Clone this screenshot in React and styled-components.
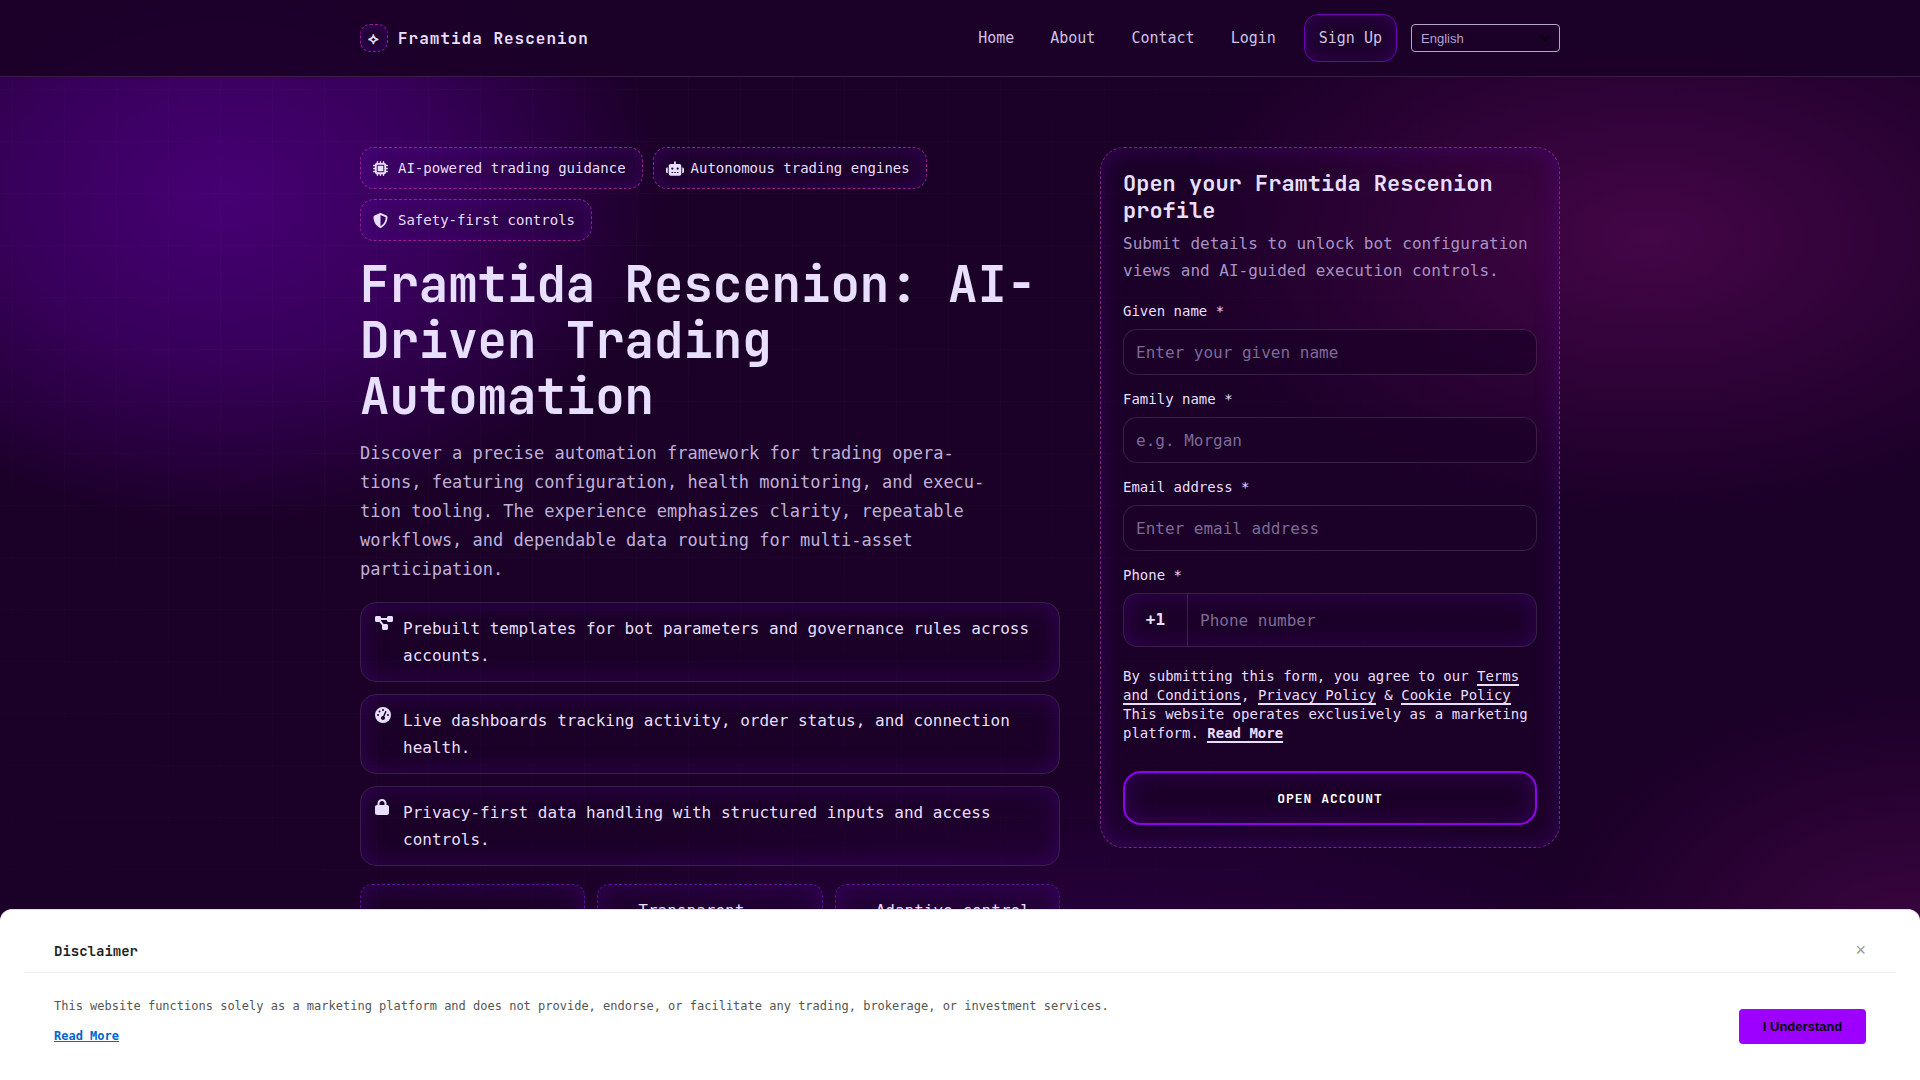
import React from 'react';
import styled, { createGlobalStyle, css } from 'styled-components';
import {
  FaMicrochip,
  FaRobot,
  FaShieldHalved,
  FaDiagramProject,
  FaGaugeHigh,
  FaLock,
  FaBolt,
  FaEye,
  FaSliders,
} from 'react-icons/fa6';

const GlobalStyles = createGlobalStyle`
  :root {
    --ink: #e8dfff;
    --muted: #b5a3d0;
    --bg: #1b0028;
    --violet: #9d00ff;
    --line: rgba(232, 223, 255, 0.14);
    --display: 'JetBrains Mono', 'DejaVu Sans Mono', monospace;
    --body: 'DejaVu Sans Mono', monospace;
  }
  * {
    box-sizing: border-box;
  }
  body {
    margin: 0;
    background: var(--bg);
    color: var(--ink);
    font-family: var(--body);
    font-size: 16px;
    line-height: 27px;
  }
  h1, h2, p, ul {
    margin: 0;
    padding: 0;
  }
`;

const glow = css`
  box-shadow: inset 0 0 24px rgba(106, 0, 200, 0.28);
`;

const PageStyles = styled.div`
  position: relative;
  height: 100vh;
  overflow: hidden;
  background-image: radial-gradient(
      ellipse 440px 330px at 225px 195px,
      rgba(112, 0, 190, 0.5),
      rgba(112, 0, 190, 0.33) 50%,
      transparent
    ),
    radial-gradient(ellipse 480px 275px at 86% 22%, rgba(172, 20, 150, 0.28), transparent),
    radial-gradient(ellipse 380px 260px at 100% 88%, rgba(150, 20, 130, 0.26), transparent),
    radial-gradient(ellipse 700px 300px at 56% 100%, rgba(110, 0, 190, 0.24), transparent);
  /* faint grid, fading out towards the right */
  &::before {
    content: '';
    position: absolute;
    inset: 0;
    background-image: linear-gradient(rgba(232, 223, 255, 0.025) 1px, transparent 1px),
      linear-gradient(90deg, rgba(232, 223, 255, 0.025) 1px, transparent 1px);
    background-size: 52px 52px;
    background-position: 12px 37px;
    mask-image: radial-gradient(ellipse 1250px 1200px at 30% 30%, #000, transparent);
  }
  > * {
    position: relative;
  }
`;

const HeaderStyles = styled.header`
  background: rgba(27, 0, 40, 0.93);
  border-bottom: 1px solid var(--line);
`;

const Container = styled.div`
  max-width: 1200px;
  margin: 0 auto;
`;

const Bar = styled(Container)`
  display: flex;
  align-items: center;
  justify-content: space-between;
  padding: 14px 0;
`;

const Brand = styled.a`
  display: flex;
  align-items: center;
  gap: 10px;
  color: var(--ink);
  font-family: var(--display);
  font-weight: 700;
  letter-spacing: 1px;
  text-decoration: none;
`;

const Mark = styled.span`
  display: grid;
  place-items: center;
  width: 28px;
  height: 28px;
  border: 1px dashed #9c1f96;
  border-radius: 10px;
  box-shadow: inset 0 0 12px rgba(106, 0, 200, 0.4);
`;

const NavStyles = styled.nav`
  display: flex;
  align-items: center;
  gap: 14px;
  font-size: 15px;
  a {
    color: #cfc2e8;
    text-decoration: none;
  }
`;

const Links = styled.div`
  display: flex;
  gap: 8px;
  a {
    padding: 0 14px;
  }
`;

const SignUp = styled.a`
  ${glow}
  padding: 0 14px;
  border: 1px solid #6f00b8;
  border-radius: 14px;
  line-height: 46px;
`;

const Language = styled.div`
  position: relative;
  display: flex;
  select {
    width: 149px;
    height: 28px;
    padding: 0 9px;
    appearance: none;
    background: transparent;
    border: 1px solid var(--muted);
    border-radius: 4px;
    color: var(--muted);
    font: 13px 'Liberation Sans', sans-serif;
  }
  svg {
    position: absolute;
    top: 10px;
    right: 10px;
    pointer-events: none;
  }
`;

const Hero = styled(Container)`
  display: grid;
  grid-template-columns: minmax(0, 1fr) 460px;
  align-items: start;
  gap: 40px;
  padding-top: 70px;
`;

const Chips = styled.ul`
  display: flex;
  flex-wrap: wrap;
  gap: 10px;
  list-style: none;
`;

const Chip = styled.li`
  ${glow}
  display: flex;
  align-items: center;
  gap: 7px;
  height: 42px;
  padding: 0 16px 0 12px;
  border: 1px dashed #9c1f96;
  border-radius: 14px;
  font-size: 14px;
`;

const IconSlot = styled.span`
  display: flex;
  flex: none;
  width: 18px;
  svg {
    width: 18px;
    height: ${({ $size }) => $size || 16}px;
  }
`;

const Title = styled.h1`
  margin: 16px 0 14px;
  font-family: var(--display);
  font-size: 49px;
  font-weight: 700;
  line-height: 56px;
`;

const Lead = styled.p`
  max-width: 640px;
  color: #bfb0da;
  font-size: 17px;
  line-height: 29px;
`;

const Features = styled.ul`
  display: grid;
  gap: 12px;
  margin: 18px 0;
  list-style: none;
`;

const Feature = styled.li`
  ${glow}
  display: flex;
  align-items: flex-start;
  gap: 10px;
  padding: 12px 14px;
  border: 1px solid var(--line);
  border-radius: 16px;
`;

const Perks = styled.ul`
  display: grid;
  grid-template-columns: repeat(3, minmax(0, 1fr));
  gap: 12px;
  list-style: none;
`;

const Perk = styled.li`
  ${glow}
  display: flex;
  align-items: center;
  gap: 10px;
  padding: 12px;
  border: 1px dashed #5c0f9c;
  border-radius: 12px;
`;

const FormCard = styled.form`
  ${glow}
  padding: 22px;
  border: 1px dashed #8a1f8f;
  border-radius: 24px;
  h2 {
    font-family: var(--display);
    font-size: 22px;
    font-weight: 700;
    line-height: 27px;
  }
  > p {
    margin: 6px 0 15px;
    color: #a892c4;
  }
`;

const Field = styled.div`
  margin-bottom: 12px;
  label {
    display: block;
    margin-bottom: 6px;
    font-size: 14px;
    line-height: 24px;
  }
`;

const Input = styled.input`
  width: 100%;
  height: 46px;
  padding: 0 12px;
  background: rgba(27, 0, 40, 0.7);
  border: 1px solid var(--line);
  border-radius: 14px;
  color: var(--ink);
  font: 16px var(--body);
  &::placeholder {
    color: #7e6a96;
    opacity: 1;
  }
`;

const PhoneBox = styled.div`
  ${glow}
  display: flex;
  height: 54px;
  border: 1px solid var(--line);
  border-radius: 14px;
  span {
    width: 64px;
    border-right: 1px solid var(--line);
    font-weight: 700;
    line-height: 52px;
    text-align: center;
  }
  ${Input} {
    flex: 1;
    height: 52px;
    background: none;
    border: 0;
  }
`;

const Legal = styled.div`
  margin: 20px 0 28px;
  font-size: 14px;
  line-height: 19px;
  a {
    border-bottom: 2px solid var(--ink);
    color: var(--ink);
    text-decoration: none;
  }
`;

const Submit = styled.button`
  ${glow}
  display: block;
  width: 100%;
  height: 54px;
  background: transparent;
  border: 2px solid #9000ea;
  border-radius: 18px;
  color: #fff;
  font-family: var(--display);
  font-size: 13px;
  font-weight: 700;
  letter-spacing: 1px;
  text-transform: uppercase;
`;

const NoticeStyles = styled.aside`
  && {
    position: fixed;
  }
  right: 0;
  bottom: 0;
  left: 0;
  padding: 19px 24px 0;
  background: #fff;
  border-top: 1px solid #e4dcec;
  border-radius: 12px 12px 0 0;
  color: #555;
  font-size: 12px;
  line-height: 20px;
`;

const NoticeHead = styled.div`
  display: flex;
  align-items: center;
  justify-content: space-between;
  height: 44px;
  padding: 0 30px;
  border-bottom: 1px solid #eee;
  h2 {
    color: #222;
    font-family: var(--display);
    font-size: 14px;
    font-weight: 700;
  }
  button {
    padding: 0;
    background: none;
    border: 0;
    color: #999;
    font: 18px 'Liberation Sans', sans-serif;
  }
`;

const NoticeBody = styled.div`
  display: flex;
  align-items: center;
  justify-content: space-between;
  padding: 23px 30px;
  p {
    margin-bottom: 10px;
  }
  a {
    display: inline-block;
    margin-bottom: 11px;
    color: #0066cc;
    font-weight: 700;
  }
`;

const Accept = styled.button`
  width: 127px;
  height: 35px;
  background: var(--violet);
  border: 0;
  border-radius: 4px;
  color: #000;
  font: bold 13px 'Liberation Sans', sans-serif;
`;

const chips = [
  { icon: FaMicrochip, text: 'AI-powered trading guidance' },
  { icon: FaRobot, text: 'Autonomous trading engines' },
  { icon: FaShieldHalved, text: 'Safety-first controls' },
];

const features = [
  {
    icon: FaDiagramProject,
    text: 'Prebuilt templates for bot parameters and governance rules across accounts.',
  },
  {
    icon: FaGaugeHigh,
    text: 'Live dashboards tracking activity, order status, and connection health.',
  },
  {
    icon: FaLock,
    text: 'Privacy-first data handling with structured inputs and access controls.',
  },
];

const perks = [
  { icon: FaBolt, text: 'Quick setup' },
  { icon: FaEye, text: 'Transparent workflows' },
  { icon: FaSliders, text: 'Adaptive control panels' },
];

const fields = [
  { id: 'given', label: 'Given name *', placeholder: 'Enter your given name', type: 'text' },
  { id: 'family', label: 'Family name *', placeholder: 'e.g. Morgan', type: 'text' },
  { id: 'email', label: 'Email address *', placeholder: 'Enter email address', type: 'email' },
];

function Header() {
  return (
    <HeaderStyles>
      <Bar>
        <Brand href="#">
          <Mark>⟡</Mark>
          Framtida Rescenion
        </Brand>
        <NavStyles>
          <Links>
            <a href="#home">Home</a>
            <a href="#about">About</a>
            <a href="#contact">Contact</a>
            <a href="#login">Login</a>
          </Links>
          <SignUp href="#signup">Sign Up</SignUp>
          <Language>
            <select aria-label="Language">
              <option>English</option>
            </select>
            <svg width="10" height="8" viewBox="0 0 10 8" aria-hidden="true">
              <path d="M1 2l4 4 4-4" fill="none" stroke="#08000c" strokeWidth="2" />
            </svg>
          </Language>
        </NavStyles>
      </Bar>
    </HeaderStyles>
  );
}

function SignUpForm() {
  return (
    <FormCard onSubmit={(e) => e.preventDefault()}>
      <h2>Open your Framtida Rescenion profile</h2>
      <p>Submit details to unlock bot configuration views and AI-guided execution controls.</p>
      {fields.map((field) => (
        <Field key={field.id}>
          <label htmlFor={field.id}>{field.label}</label>
          <Input id={field.id} type={field.type} placeholder={field.placeholder} />
        </Field>
      ))}
      <Field>
        <label htmlFor="phone">Phone *</label>
        <PhoneBox>
          <span>+1</span>
          <Input id="phone" type="tel" placeholder="Phone number" />
        </PhoneBox>
      </Field>
      <Legal>
        By submitting this form, you agree to our <a href="#terms">Terms and Conditions</a>,{' '}
        <a href="#privacy">Privacy Policy</a> &amp; <a href="#cookies">Cookie Policy</a>
        <br />
        This website operates exclusively as a marketing platform.{' '}
        <a href="#more">
          <b>Read More</b>
        </a>
      </Legal>
      <Submit type="submit">Open account</Submit>
    </FormCard>
  );
}

function Notice() {
  return (
    <NoticeStyles>
      <NoticeHead>
        <h2>Disclaimer</h2>
        <button type="button" aria-label="Close">
          ×
        </button>
      </NoticeHead>
      <NoticeBody>
        <div>
          <p>
            This website functions solely as a marketing platform and does not provide, endorse, or
            facilitate any trading, brokerage, or investment services.
          </p>
          <a href="#more">Read More</a>
        </div>
        <Accept type="button">I Understand</Accept>
      </NoticeBody>
    </NoticeStyles>
  );
}

export default function App() {
  return (
    <PageStyles>
      <GlobalStyles />
      <Header />
      <Hero as="main">
        <section>
          <Chips>
            {chips.map(({ icon: Icon, text }) => (
              <Chip key={text}>
                <IconSlot $size={15}>
                  <Icon preserveAspectRatio="xMinYMid meet" />
                </IconSlot>
                {text}
              </Chip>
            ))}
          </Chips>
          <Title>Framtida Rescenion: AI-Driven Trading Automation</Title>
          <Lead>
            Discover a precise automation framework for trading opera&shy;tions, featuring
            configuration, health monitoring, and execu&shy;tion tooling. The experience emphasizes
            clarity, repeatable workflows, and dependable data routing for multi-asset
            participation.
          </Lead>
          <Features>
            {features.map(({ icon: Icon, text }) => (
              <Feature key={text}>
                <IconSlot>
                  <Icon preserveAspectRatio="xMinYMid meet" />
                </IconSlot>
                {text}
              </Feature>
            ))}
          </Features>
          <Perks>
            {perks.map(({ icon: Icon, text }) => (
              <Perk key={text}>
                <IconSlot>
                  <Icon preserveAspectRatio="xMinYMid meet" />
                </IconSlot>
                {text}
              </Perk>
            ))}
          </Perks>
        </section>
        <SignUpForm />
      </Hero>
      <Notice />
    </PageStyles>
  );
}
